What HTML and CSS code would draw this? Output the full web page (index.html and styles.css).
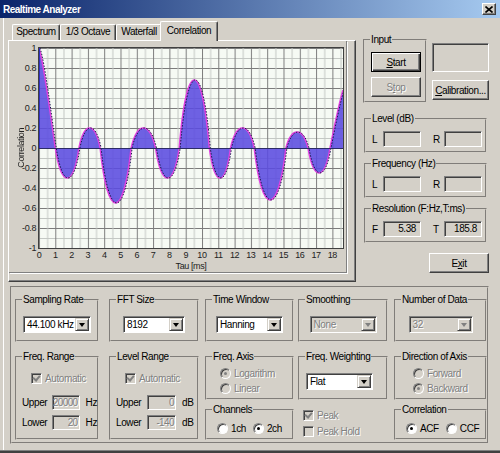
FILE: index.html
```html
<!DOCTYPE html>
<html lang="en">
<head>
	<meta charset="UTF-8">
	<title>Realtime Analyzer</title>
	<link rel="stylesheet" href="styles.css">
</head>
<body>
<div class="window">
	<div class="titlebar">
		<span class="title">Realtime Analyzer</span>
		<span class="close"><svg width="8" height="7" viewBox="0 0 8 7"><path d="M0.5 0.5 L7.5 6.5 M7.5 0.5 L0.5 6.5" stroke="#000" stroke-width="1.6"/></svg></span>
	</div>

	<div class="main">
		<div class="tabctl">
			<div class="tabs">
				<div class="tab w48">Spectrum</div>
				<div class="tab w56">1/3 Octave</div>
				<div class="tab w46">Waterfall</div>
				<div class="tab sel">Correlation</div>
			</div>
			<div class="panel">
				<div class="chart">
					<div class="ytitle">Correlation</div>
					<div class="yticks">
						<span>1</span><span>0.8</span><span>0.6</span><span>0.4</span><span>0.2</span><span>0</span>
						<span>-0.2</span><span>-0.4</span><span>-0.6</span><span>-0.8</span><span>-1</span>
					</div>
					<div class="plot">
						<svg width="304" height="200" viewBox="0 0 304 200">
							<defs>
								<pattern id="gv" width="16.3" height="200" patternUnits="userSpaceOnUse">
									<rect x="0" y="0" width="1" height="200" fill="#7c7c7c"/>
									<rect x="8.15" y="0" width="1" height="200" fill="#c4c8c4"/>
								</pattern>
								<pattern id="gh" width="304" height="20" patternUnits="userSpaceOnUse">
									<rect x="0" y="0" width="304" height="1" fill="#7c7c7c"/>
									<rect x="0" y="10" width="304" height="1" fill="#c4c8c4"/>
								</pattern>
							</defs>
							<rect width="304" height="200" fill="#f6faf4"/>
							<rect width="304" height="200" fill="url(#gh)"/>
							<rect width="304" height="200" fill="url(#gv)"/>
							<path class="area" d="M0,100 L0,0 C5,15 11,65 16.3,100 C22.2,140 34,140 39.9,100 C45.2,73.3 55.8,73.3 61.1,100 C68.85,173.3 84.35,173.3 92.1,100 C98.2,73.3 110.4,73.3 116.5,100 C122.4,140 134.3,140 140.2,100 C147.7,9.3 162.8,9.3 170.3,100 C175.6,140 186.2,140 191.5,100 C197.4,73.3 209.3,73.3 215.2,100 C223.1,169.3 239,169.3 246.9,100 C252.4,78.7 263.5,78.7 269,100 C274.5,133.3 285.5,133.3 291,100 C295,80 300,55 304,42 L304,100 Z"/>
							<path class="edge" d="M0,0 C5,15 11,65 16.3,100 C22.2,140 34,140 39.9,100 C45.2,73.3 55.8,73.3 61.1,100 C68.85,173.3 84.35,173.3 92.1,100 C98.2,73.3 110.4,73.3 116.5,100 C122.4,140 134.3,140 140.2,100 C147.7,9.3 162.8,9.3 170.3,100 C175.6,140 186.2,140 191.5,100 C197.4,73.3 209.3,73.3 215.2,100 C223.1,169.3 239,169.3 246.9,100 C252.4,78.7 263.5,78.7 269,100 C274.5,133.3 285.5,133.3 291,100 C295,80 300,55 304,42"/>
							<path class="dots" d="M0,0 C5,15 11,65 16.3,100 C22.2,140 34,140 39.9,100 C45.2,73.3 55.8,73.3 61.1,100 C68.85,173.3 84.35,173.3 92.1,100 C98.2,73.3 110.4,73.3 116.5,100 C122.4,140 134.3,140 140.2,100 C147.7,9.3 162.8,9.3 170.3,100 C175.6,140 186.2,140 191.5,100 C197.4,73.3 209.3,73.3 215.2,100 C223.1,169.3 239,169.3 246.9,100 C252.4,78.7 263.5,78.7 269,100 C274.5,133.3 285.5,133.3 291,100 C295,80 300,55 304,42"/>
							<line x1="0" y1="100.5" x2="304" y2="100.5" stroke="#2c2c66" stroke-width="1.2"/>
							<line x1="0.5" y1="0" x2="0.5" y2="100" stroke="#3030c0"/>
						</svg>
					</div>
					<div class="xticks">
						<span>0</span><span>1</span><span>2</span><span>3</span><span>4</span><span>5</span><span>6</span>
						<span>7</span><span>8</span><span>9</span><span>10</span><span>11</span><span>12</span><span>13</span>
						<span>14</span><span>15</span><span>16</span><span>17</span><span>18</span>
					</div>
					<div class="xtitle">Tau [ms]</div>
				</div>
			</div>
		</div>

		<div class="side">
			<div class="row1">
				<fieldset class="input">
					<legend>Input</legend>
					<div class="body">
						<button class="btn dflt"><u>S</u>tart</button>
						<button class="btn" disabled>S<u>t</u>op</button>
					</div>
				</fieldset>
				<div class="col">
					<div class="sunk big"></div>
					<button class="btn cal"><u>C</u>alibration...</button>
				</div>
			</div>
			<fieldset class="meter">
				<legend>Level (dB)</legend>
				<div class="body">
					<span class="lbl">L</span><span class="sunk val"></span>
					<span class="lbl r">R</span><span class="sunk val"></span>
				</div>
			</fieldset>
			<fieldset class="meter">
				<legend>Frequency (Hz)</legend>
				<div class="body">
					<span class="lbl">L</span><span class="sunk val"></span>
					<span class="lbl r">R</span><span class="sunk val"></span>
				</div>
			</fieldset>
			<fieldset class="meter">
				<legend>Resolution (F:Hz,T:ms)</legend>
				<div class="body">
					<span class="lbl">F</span><span class="sunk val">5.38</span>
					<span class="lbl r">T</span><span class="sunk val">185.8</span>
				</div>
			</fieldset>
			<button class="btn exit">E<u>x</u>it</button>
		</div>
	</div>

	<div class="settings">
		<fieldset class="w84 top">
			<legend>Sampling Rate</legend>
			<div class="body"><div class="combo cw68"><span>44.100 kHz</span><i></i></div></div>
		</fieldset>
		<fieldset class="w90 top">
			<legend>FFT Size</legend>
			<div class="body"><div class="combo cw62"><span>8192</span><i></i></div></div>
		</fieldset>
		<fieldset class="w89 top">
			<legend>Time Window</legend>
			<div class="body"><div class="combo cw67"><span>Hanning</span><i></i></div></div>
		</fieldset>
		<fieldset class="w90 top">
			<legend>Smoothing</legend>
			<div class="body"><div class="combo cw67 off"><span>None</span><i></i></div></div>
		</fieldset>
		<fieldset class="w93 top">
			<legend>Number of Data</legend>
			<div class="body"><div class="combo cw64 off"><span>32</span><i></i></div></div>
		</fieldset>

		<fieldset class="w84 range">
			<legend>Freq. Range</legend>
			<div class="body">
				<div class="opt auto off"><span class="chk on"></span>Automatic</div>
				<div class="field"><span class="name">Upper</span><span class="edit">20000</span><span class="unit">Hz</span></div>
				<div class="field"><span class="name">Lower</span><span class="edit">20</span><span class="unit">Hz</span></div>
			</div>
		</fieldset>
		<fieldset class="w90 range">
			<legend>Level Range</legend>
			<div class="body">
				<div class="opt auto off"><span class="chk on"></span>Automatic</div>
				<div class="field"><span class="name">Upper</span><span class="edit">0</span><span class="unit">dB</span></div>
				<div class="field"><span class="name">Lower</span><span class="edit">-140</span><span class="unit">dB</span></div>
			</div>
		</fieldset>
		<div class="stack">
			<fieldset class="w89 half">
				<legend>Freq. Axis</legend>
				<div class="body pl13">
					<div class="opt off"><span class="radio on"></span>Logarithm</div>
					<div class="opt off"><span class="radio"></span>Linear</div>
				</div>
			</fieldset>
			<fieldset class="w89 small">
				<legend>Channels</legend>
				<div class="body inline">
					<div class="opt"><span class="radio"></span>1ch</div>
					<div class="opt"><span class="radio on"></span>2ch</div>
				</div>
			</fieldset>
		</div>
		<div class="stack">
			<fieldset class="w90 half">
				<legend>Freq. Weighting</legend>
				<div class="body combo-left"><div class="combo cw67"><span>Flat</span><i></i></div></div>
			</fieldset>
			<div class="checks">
				<div class="opt off"><span class="chk on"></span>Peak</div>
				<div class="opt off"><span class="chk"></span>Peak Hold</div>
			</div>
		</div>
		<div class="stack">
			<fieldset class="w93 half">
				<legend>Direction of Axis</legend>
				<div class="body pl17">
					<div class="opt off"><span class="radio"></span>Forward</div>
					<div class="opt off"><span class="radio on"></span>Backward</div>
				</div>
			</fieldset>
			<fieldset class="w93 small">
				<legend>Correlation</legend>
				<div class="body inline">
					<div class="opt"><span class="radio on"></span>ACF</div>
					<div class="opt"><span class="radio"></span>CCF</div>
				</div>
			</fieldset>
		</div>
	</div>
</div>
</body>
</html>
```

FILE: styles.css
```css
body {
	margin: 0;
	width: 500px;
	height: 453px;
	overflow: hidden;
	background: #d4d0c8;
	font-family: "Liberation Sans", Arial, sans-serif;
	font-size: 10px;
	letter-spacing: -0.4px;
	color: #000;
	white-space: nowrap;
}
.window {
	height: 453px;
	box-sizing: border-box;
	border-bottom: 2px solid #404040;
	box-shadow: inset 0 -1px #808080, inset 3px 0 #d4d0c8, inset 4px 0 #fff;
}

/* title bar */
.titlebar {
	height: 18px;
	display: flex;
	align-items: center;
	justify-content: space-between;
	padding: 0 4px 0 3px;
	background: linear-gradient(to right, #0a246a, #a6caf0);
}
.title {
	color: #fff;
	font-weight: bold;
	letter-spacing: -0.5px;
}
.close {
	width: 14px;
	height: 12px;
	box-sizing: border-box;
	display: flex;
	align-items: center;
	justify-content: center;
	background: #d4d0c8;
	border: 1px solid;
	border-color: #fff #404040 #404040 #fff;
	box-shadow: inset -1px -1px #808080;
}

.main {
	display: flex;
	height: 264px;
}

/* tabs */
.tabctl {
	margin: 3px 0 0 8px;
	width: 348px;
}
.tabs {
	display: flex;
	align-items: flex-end;
	height: 19px;
	padding-left: 4px;
}
.tab {
	height: 16px;
	box-sizing: border-box;
	border: 1px solid #fff;
	border-bottom: 0;
	border-right-color: #404040;
	border-radius: 2px 2px 0 0;
	box-shadow: inset -1px 0 #808080;
	line-height: 14px;
	text-align: center;
}
.w48 { width: 48px; }
.w56 { width: 56px; }
.w46 { width: 46px; }
.tab.sel {
	width: 58px;
	height: 20px;
	margin: 0 -2px -1px;
	position: relative;
	z-index: 1;
	background: #d4d0c8;
	line-height: 17px;
}
.panel {
	height: 242px;
	box-sizing: border-box;
	border: 1px solid;
	border-color: #fff #404040 #404040 #fff;
	box-shadow: inset -1px -1px #808080;
}

/* chart */
.chart {
	display: grid;
	grid-template-columns: 29px 306px;
	grid-template-rows: 202px 12px 11px;
	width: 337px;
	padding-top: 6px;
	border-right: 1px solid #808080;
	border-bottom: 1px solid #808080;
	box-shadow: 1px 1px #fff;
	font-size: 9px;
	letter-spacing: -0.4px;
	color: #222;
}
.ytitle {
	grid-column: 1;
	grid-row: 1;
	writing-mode: vertical-rl;
	transform: rotate(180deg);
	align-self: center;
	justify-self: start;
	margin-left: 7px;
	line-height: 10px;
}
.yticks {
	grid-column: 1;
	grid-row: 1;
	display: flex;
	flex-direction: column;
	margin-top: -9px;
	padding-right: 2px;
	text-align: right;
}
.yticks span {
	height: 20px;
	line-height: 20px;
}
.plot {
	grid-column: 2;
	grid-row: 1;
	border: 1px solid #404040;
}
.plot svg {
	display: block;
}
.area {
	fill: #5b4be0;
	fill-opacity: 0.88;
}
.edge {
	fill: none;
	stroke: #e040e0;
	stroke-width: 1.5;
}
.dots {
	fill: none;
	stroke: #1a1a50;
	stroke-width: 1;
	stroke-dasharray: 1.5 1.5;
	transform: translateX(1px);
}
.xticks {
	grid-column: 2;
	grid-row: 2;
	display: grid;
	grid-template-columns: repeat(19, 16.3px);
	margin-left: -7.15px;
	text-align: center;
	line-height: 12px;
}
.xtitle {
	grid-column: 2;
	grid-row: 3;
	text-align: center;
	line-height: 11px;
}

/* common controls */
fieldset {
	margin: 0;
	padding: 0;
	min-width: 0;
	box-sizing: border-box;
	border: 2px groove #d4d0c8;
}
legend {
	padding: 0 1px;
	margin-left: 5px;
	line-height: 12px;
}
.btn {
	margin: 0;
	padding: 0;
	font: inherit;
	letter-spacing: inherit;
	color: #000;
	background: #d4d0c8;
	border: 1px solid;
	border-color: #fff #404040 #404040 #fff;
	box-shadow: inset -1px -1px #808080;
	height: 20px;
}
.btn.dflt {
	border-color: #000;
	box-shadow: inset 1px 1px #fff, inset -1px -1px #404040, inset -2px -2px #808080;
}
.btn:disabled,
.off {
	color: #808080;
	text-shadow: 1px 1px #fff;
}
.sunk {
	box-sizing: border-box;
	border: 1px solid;
	border-color: #808080 #fff #fff #808080;
	box-shadow: inset 1px 1px #404040, inset -1px -1px #d4d0c8;
}

/* side panel */
.side {
	margin: 16px 0 0 7px;
	width: 126px;
}
.row1 {
	display: flex;
}
.input {
	width: 64px;
	height: 69px;
}
.input .body {
	display: flex;
	flex-direction: column;
	gap: 5px;
	padding: 6px 0 0 6px;
}
.input .btn {
	width: 50px;
}
.col {
	margin-left: 5px;
	width: 57px;
}
.sunk.big {
	margin-top: 9px;
	height: 29px;
}
.btn.cal {
	margin-top: 8px;
	width: 57px;
}
.meter {
	width: 123px;
	height: 40px;
	margin: 5px 0 0 1px;
}
.row1 + .meter {
	margin-top: 10px;
}
.meter .body {
	display: flex;
	align-items: center;
	padding: 6px 0 0 6px;
}
.meter .lbl {
	width: 11px;
}
.meter .lbl.r {
	margin-left: 12px;
}
.sunk.val {
	width: 38px;
	height: 16px;
	line-height: 14px;
	text-align: right;
	padding-right: 4px;
}
.btn.exit {
	margin: 10px 0 0 66px;
	width: 60px;
}

/* bottom settings */
.settings {
	margin: 4px 0 0 10px;
	width: 479px;
	height: 158px;
	box-sizing: border-box;
	border: 2px groove #d4d0c8;
	padding: 6px 0 0 3px;
	display: grid;
	grid-template-columns: 94px 96px 93px 96px 93px;
	grid-template-rows: 48px 89px;
	row-gap: 9px;
}
.w84 { width: 84px; }
.w89 { width: 89px; }
.w90 { width: 90px; }
.w93 { width: 93px; }
.top { height: 48px; }
.top .body {
	display: flex;
	justify-content: center;
	padding-top: 10px;
}
.combo {
	display: flex;
	align-items: center;
	height: 17px;
	box-sizing: border-box;
	border: 1px solid;
	border-color: #808080 #fff #fff #808080;
	box-shadow: inset 1px 1px #404040;
	background: #fff;
	padding: 1px 1px 1px 3px;
}
.combo span {
	flex: 1;
	line-height: 13px;
}
.combo i {
	width: 14px;
	height: 13px;
	box-sizing: border-box;
	display: flex;
	align-items: center;
	justify-content: center;
	background: #d4d0c8;
	border: 1px solid;
	border-color: #d4d0c8 #404040 #404040 #d4d0c8;
	box-shadow: inset 1px 1px #fff, inset -1px -1px #808080;
}
.combo i::after {
	content: "";
	border-top: 4px solid #000;
	border-left: 3.5px solid transparent;
	border-right: 3.5px solid transparent;
}
.combo.off {
	background: #d4d0c8;
}
.combo.off span {
	color: #808080;
	text-shadow: 1px 1px #fff;
}
.combo.off i::after {
	border-top-color: #808080;
}
.cw62 { width: 62px; }
.cw64 { width: 64px; }
.cw67 { width: 67px; }
.cw68 { width: 68px; }

.range { height: 89px; }
.range .body {
	padding: 9px 0 0 5px;
}
.opt {
	display: flex;
	align-items: center;
	gap: 3px;
	height: 15px;
}
.opt.auto {
	margin-left: 9px;
	height: 13px;
}
.field {
	display: flex;
	align-items: center;
	height: 15px;
	margin-top: 5px;
}
.opt + .field {
	margin-top: 10px;
}
.field .name {
	width: 31px;
}
.edit {
	width: 29px;
	height: 15px;
	box-sizing: border-box;
	border: 1px solid;
	border-color: #808080 #fff #fff #808080;
	box-shadow: inset 1px 1px #404040;
	color: #808080;
	text-shadow: 1px 1px #fff;
	text-align: right;
	padding-right: 1px;
	letter-spacing: -0.6px;
	line-height: 13px;
	overflow: hidden;
}
.unit {
	margin-left: 6px;
}

.stack {
	display: flex;
	flex-direction: column;
	gap: 4px;
}
.half { height: 49px; }
.small { height: 36px; }
.half .body { padding-top: 3px; }
.pl13 { padding-left: 13px; }
.pl17 { padding-left: 17px; }
.body.combo-left { padding: 10px 0 0 6px; }
.small .body {
	display: flex;
	gap: 7px;
	padding: 5px 0 0 10px;
}
.checks {
	padding: 3px 0 0 5px;
}
.checks .opt {
	height: 16px;
}

.chk,
.radio {
	width: 11px;
	height: 11px;
	box-sizing: border-box;
	position: relative;
	flex: none;
	border: 1px solid;
	border-color: #808080 #fff #fff #808080;
	box-shadow: inset 1px 1px #404040;
	background: #fff;
}
.radio {
	border-radius: 50%;
}
.off .chk,
.off .radio {
	background: #d4d0c8;
}
.radio.on::after {
	content: "";
	position: absolute;
	left: 3px;
	top: 3px;
	width: 3px;
	height: 3px;
	border-radius: 50%;
	background: #000;
}
.chk.on::after {
	content: "";
	position: absolute;
	left: 2px;
	top: 0;
	width: 3px;
	height: 5px;
	border-right: 2px solid #000;
	border-bottom: 2px solid #000;
	transform: rotate(40deg);
}
.off .radio.on::after {
	background: #808080;
}
.off .chk.on::after {
	border-color: #808080;
}
```
